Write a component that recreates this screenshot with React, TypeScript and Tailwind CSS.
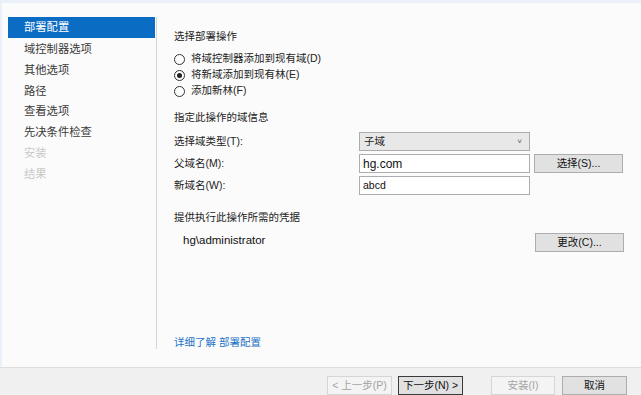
const font = "font-['Liberation_Sans','Noto_Sans_CJK_SC',sans-serif]";

const steps = [
  { label: '部署配置', active: true },
  { label: '域控制器选项' },
  { label: '其他选项' },
  { label: '路径' },
  { label: '查看选项' },
  { label: '先决条件检查' },
  { label: '安装', disabled: true },
  { label: '结果', disabled: true },
];

function Radio({ checked, label }: { checked?: boolean; label: string }) {
  return (
    <div className="flex h-[16px] items-center">
      <span className="ml-[-1px] flex h-[11px] w-[11px] items-center justify-center rounded-full border border-[#333] bg-white">
        {checked && <span className="h-[5px] w-[5px] rounded-full bg-[#222]" />}
      </span>
      <span className="ml-[6px] text-[10.5px] text-[#222]">{label}</span>
    </div>
  );
}

function Btn({
  children,
  width,
  disabled,
  isDefault,
}: {
  children: React.ReactNode;
  width: string;
  disabled?: boolean;
  isDefault?: boolean;
}) {
  return (
    <button
      className={`flex h-[19px] items-center justify-center border text-[10.5px] leading-none ${width} ${
        disabled
          ? 'border-[#d6d6d6] bg-[#f4f4f4] text-[#a3a3a3]'
          : isDefault
            ? 'border-[#3a3a3a] bg-[#e1e1e1] text-[#111]'
            : 'border-[#adadad] bg-[#e1e1e1] text-[#111]'
      }`}
    >
      {children}
    </button>
  );
}

export default function App() {
  return (
    <div className={`flex h-[395px] w-[641px] flex-col bg-[#f0f0f0] ${font}`}>
      <div className="flex h-[367px] border-l-[2px] border-t-[3px] border-[#ebf1f9] bg-[#fbfbfb]">
        {/* step list */}
        <div className="mt-[14px] h-[332px] w-[155px] border-r border-[#d4d4d4] pl-[6px]">
          {steps.map((s) => (
            <div
              key={s.label}
              className={`flex w-[147px] items-center pl-[16px] text-[11.3px] ${
                s.active
                  ? 'h-[21px] bg-[#0b6cc3] text-white'
                  : s.disabled
                    ? 'h-[20.7px] pt-[3px] text-[#c9c9c9]'
                    : 'h-[20.7px] pt-[3px] text-[#3a3a3a]'
              }`}
            >
              {s.label}
            </div>
          ))}
        </div>

        {/* page */}
        <div className="flex flex-1 flex-col pb-[16px] pl-[17px] pt-[26px] text-[10.5px] text-[#222]">
          <div className="flex h-[16px] items-center">选择部署操作</div>
          <div className="mt-[6px] flex flex-col pl-[1px]">
            <Radio label="将域控制器添加到现有域(D)" />
            <Radio checked label="将新域添加到现有林(E)" />
            <Radio label="添加新林(F)" />
          </div>

          <div className="mt-[11px] flex h-[16px] items-center">指定此操作的域信息</div>

          <div className="mt-[6px] flex h-[19px] items-center">
            <span className="w-[185px]">选择域类型(T):</span>
            <div className="flex h-[19px] w-[171px] items-center justify-between border border-[#acacac] bg-[#e8e8e8] pl-[4px] pr-[7px]">
              <span>子域</span>
              <span className="text-[8px] text-[#555]">˅</span>
            </div>
          </div>

          <div className="mt-[3px] flex h-[19px] items-center">
            <span className="w-[185px]">父域名(M):</span>
            <div className="flex h-[19px] w-[171px] items-center border border-[#abadb3] bg-white pl-[3px] text-[12px] text-[#111]">
              hg.com
            </div>
            <div className="ml-[4px]">
              <Btn width="w-[89px]">选择(S)...</Btn>
            </div>
          </div>

          <div className="mt-[3px] flex h-[19px] items-center">
            <span className="w-[185px]">新域名(W):</span>
            <div className="flex h-[19px] w-[171px] items-center border border-[#abadb3] bg-white pl-[3px] text-[10.5px] text-[#111]">
              abcd
            </div>
          </div>

          <div className="mt-[15px] flex h-[16px] items-center">提供执行此操作所需的凭据</div>

          <div className="mt-[7px] flex h-[19px] items-start justify-between">
            <span className="ml-[9px] mt-[-1px] text-[11.5px] text-[#111]">hg\administrator</span>
            <div className="mr-[17px]">
              <Btn width="w-[89px]">更改(C)...</Btn>
            </div>
          </div>

          <div className="flex-1" />
          <div className="flex h-[16px] items-center">
            <a className="text-[#1b72c6]">详细了解 部署配置</a>
          </div>
        </div>
      </div>

      <div className="h-px bg-[#dedede]" />

      <div className="flex flex-1 items-start justify-end pr-[14px] pt-[8px]">
        <Btn width="w-[65px]" disabled>
          &lt; 上一步(P)
        </Btn>
        <div className="ml-[6px]">
          <Btn width="w-[65px]" isDefault>
            下一步(N) &gt;
          </Btn>
        </div>
        <div className="ml-[28px]">
          <Btn width="w-[64px]" disabled>
            安装(I)
          </Btn>
        </div>
        <div className="ml-[7px]">
          <Btn width="w-[65px]">取消</Btn>
        </div>
      </div>
    </div>
  );
}
